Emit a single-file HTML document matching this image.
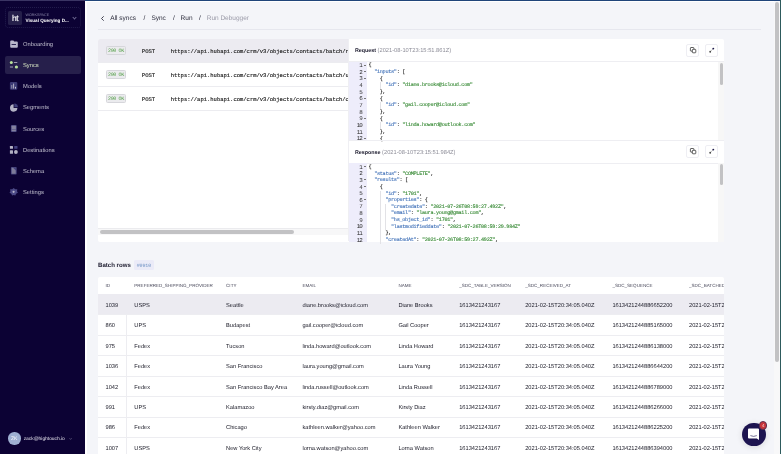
<!DOCTYPE html>
<html><head><meta charset="utf-8">
<style>
*{box-sizing:border-box;margin:0;padding:0}
html,body{width:781px;height:454px;overflow:hidden;background:#f4f5f9;font-family:"Liberation Sans",sans-serif;position:relative;text-rendering:geometricPrecision}
.abs{position:absolute}
#side{left:0;top:0;width:85px;height:454px;background:#0c0234}
#topline{left:85px;top:0;width:696px;height:1px;background:#20457a}
#topline2{left:0;top:0;width:85px;height:1px;background:#3b3564}
.nav{position:absolute;left:23px;font-size:5.75px;color:#c0bfce;line-height:8px;white-space:nowrap}
.navic{position:absolute;left:10px;width:8px;height:7px}
#main{left:85px;top:1px;width:690px;height:453px;border-left:2px solid #fff;border-top:1px solid #fff}
.crumb{position:absolute;top:15.4px;font-size:6.5px;line-height:8px;color:#2a2a3a;white-space:nowrap}
.mono{font-family:"Liberation Mono",monospace}
.panel{position:absolute;background:#fff}
.badge{position:absolute;left:7.9px;width:19.7px;height:9px;border:0.5px solid #d6d6db;background:#ebebee;border-radius:1.5px;font-family:"Liberation Mono",monospace;font-size:5.1px;letter-spacing:-0.45px;line-height:8px;padding-top:0.4px;color:#56a04a;text-align:center;overflow:hidden}
.post{position:absolute;left:43.6px;font-size:5.6px;line-height:6px;color:#222;-webkit-text-stroke:0.15px #222}
.url{position:absolute;left:72.5px;font-size:5.5px;line-height:6px;color:#222;white-space:pre;-webkit-text-stroke:0.15px #222}
.ln{position:absolute;left:349px;width:12.9px;margin-top:0.7px;text-align:right;font-family:"Liberation Mono",monospace;font-size:5.9px;letter-spacing:-0.95px;line-height:6.65px;color:#2e2e2e;transform:scaleY(1)}
.fold{position:absolute;left:363.8px;width:2.2px;height:0.6px;margin-top:2.3px;background:#777}
.cl{position:absolute;left:368.5px;font-family:"Liberation Mono",monospace;font-size:5.2px;letter-spacing:-0.30px;line-height:6.65px;color:#222;white-space:pre;-webkit-text-stroke:0.12px currentColor}
k{color:#4272b8}
s{color:#388a36;text-decoration:none}
.th{position:absolute;top:6.3px;font-size:4.55px;line-height:6px;color:#4a4a5c;white-space:nowrap}
.td{position:absolute;font-size:5.7px;line-height:8px;color:#22222e;white-space:nowrap}
.btn{position:absolute;width:12.5px;height:12.6px;border:0.5px solid #eeeef3;border-radius:2px;background:#fff}
#root{position:absolute;left:0;top:0;width:781px;height:454px;will-change:transform;overflow:hidden}
</style></head><body><div id="root">
<div id="side" class="abs">
  <div class="abs" style="left:5px;top:7px;width:76px;height:21px;border:1px dotted #221c4c;border-radius:3px"></div>
  <div class="abs" style="left:8.2px;top:10.9px;width:14px;height:14px;background:#251f4a;border-radius:1.5px;color:#f4f4f8;font-weight:400;font-size:8.4px;line-height:14px;padding-top:0.2px;text-align:center;letter-spacing:-0.2px;-webkit-text-stroke:0.15px #fff">ht</div>
  <div class="abs" style="left:25.5px;top:11.6px;font-size:3.7px;color:#8a86a8;line-height:6px">WORKSPACE</div>
  <div class="abs" style="left:25.5px;top:17px;font-size:4.6px;color:#fff;font-weight:700;line-height:7px;white-space:nowrap">Visual Querying D...</div>
  <div class="abs" style="left:72.5px;top:16px;width:3px;height:3px;border-right:0.6px solid #6d6890;border-bottom:0.6px solid #6d6890;transform:rotate(45deg)"></div>
  <div class="abs" style="left:5px;top:56px;width:75.5px;height:18px;background:#261f4b;border-radius:2px"></div>
  <svg class="abs" style="left:0;top:0" width="85" height="220" viewBox="0 0 85 220">
    <!-- onboarding folder -->
    <path d="M10.2 41.6 q0-1 1-1 h2.2 l0.8 0.8 h2.6 q1 0 1 1 v4.4 q0 1-1 1 h-5.6 q-1 0-1-1z" fill="#b9b8cc"/>
    <rect x="11.6" y="44.1" width="4.4" height="0.9" fill="#1d1848"/>
    <!-- syncs -->
    <circle cx="11.3" cy="62.4" r="1.5" fill="#b9e29a"/>
    <rect x="13.9" y="62.1" width="3.4" height="0.9" fill="#a9a6b8"/>
    <rect x="9.9" y="66.4" width="3.1" height="1.2" fill="#8f8ca6"/>
    <circle cx="16.4" cy="67" r="1.6" fill="#b9e29a"/>
    <!-- models -->
    <rect x="9.9" y="81.9" width="7.4" height="7.9" rx="1.2" fill="#3c3a74"/>
    <rect x="11.3" y="85" width="1" height="3.6" fill="#9896b0"/>
    <rect x="13.1" y="83.6" width="1" height="5" fill="#b4b2c6"/>
    <rect x="15" y="86.8" width="1" height="1.8" fill="#c4c2d2"/>
    <!-- segments pie -->
    <path d="M13.6 104.3 A3.7 3.7 0 1 0 17.4 108.1 L13.6 108.1 Z" fill="#b3b2c4"/>
    <path d="M14.3 103.4 A3.6 3.6 0 0 1 17.9 107.2 L14.3 107.2 Z" fill="#41407a"/>
    <!-- sources -->
    <rect x="10.9" y="125.1" width="5.8" height="6.9" rx="1" fill="#4a4880"/>
    <rect x="11.7" y="125.7" width="4.2" height="5.6" rx="0.5" fill="#84829e"/><rect x="11.7" y="129.2" width="4.2" height="0.5" fill="#4a4880"/>
    <!-- destinations -->
    <rect x="9.9" y="145.9" width="3.1" height="2.9" rx="0.5" fill="#b6b5c6"/>
    <rect x="14.2" y="145.9" width="3.3" height="2.9" rx="0.5" fill="#434180"/>
    <rect x="9.9" y="150.2" width="3.1" height="3.5" rx="0.5" fill="#b0afc2"/>
    <circle cx="15.9" cy="152" r="1.9" fill="#b3b2c4"/>
    <!-- schema -->
    <rect x="10.9" y="166.9" width="5.8" height="7.6" rx="0.8" fill="#45437c"/>
    <path d="M11.7 167.8 h1.4 l2.6 2.6 v3.3 h-4z" fill="#7e7c9a"/>
    <!-- settings -->
    <path d="M13.7 188 l1.5 1.3 2.1 0 -0.3 1.9 0.9 1.6 -1.8 1 -0.8 1.8 -1.6 -0.7 -1.6 0.7 -0.8 -1.8 -1.8 -1 0.9 -1.6 -0.3 -1.9 2.1 0z" fill="#4b4985"/>
    <circle cx="13.6" cy="191.8" r="1.1" fill="#b6b4ca"/>
  </svg>
  <div class="nav" style="top:40.8px">Onboarding</div>
  <div class="nav" style="top:62.0px;color:#d6e5c2">Syncs</div>
  <div class="nav" style="top:83.2px">Models</div>
  <div class="nav" style="top:104.4px">Segments</div>
  <div class="nav" style="top:125.6px">Sources</div>
  <div class="nav" style="top:146.8px">Destinations</div>
  <div class="nav" style="top:168.0px">Schema</div>
  <div class="nav" style="top:189.2px">Settings</div>
  <div class="abs" style="left:8px;top:432px;width:12.5px;height:12.5px;border-radius:50%;background:#9fb0d2;color:#fff;font-size:5px;line-height:12.5px;padding-top:0.6px;text-align:center">ZK</div>
  <div class="abs" style="left:23.7px;top:436.3px;font-size:4.87px;color:#e6e4ee;line-height:7px;white-space:nowrap">zack@hightouch.io</div>
</div>
<svg class="abs" style="left:68px;top:436.6px" width="5" height="4" viewBox="0 0 5 4"><path d="M1.5 1.2 L2.6 2.4 L3.7 1.2" fill="none" stroke="#8d8aa8" stroke-width="0.5"/></svg>
<div id="topline" class="abs"></div><div id="topline2" class="abs"></div>
<div id="main" class="abs"></div>
<!-- breadcrumb -->
<svg class="abs" style="left:100.4px;top:14.6px" width="6" height="7" viewBox="0 0 6 7"><path d="M3.7 1.3 L1.5 3.5 L3.7 5.7" fill="none" stroke="#3a3a4a" stroke-width="0.95"/></svg>
<div class="crumb" style="left:110.3px">All syncs</div>
<div class="crumb" style="left:143.5px">/</div>
<div class="crumb" style="left:151.4px">Sync</div>
<div class="crumb" style="left:173px">/</div>
<div class="crumb" style="left:180.6px">Run</div>
<div class="crumb" style="left:199px">/</div>
<div class="crumb" style="left:206.7px;color:#9a9aa8">Run Debugger</div>
<div class="abs" style="left:98px;top:29px;width:662.5px;height:1px;background:#e6e7ee"></div>

<!-- requests panel -->
<div class="panel" style="left:98.2px;top:39px;width:625.8px;height:202.7px;border-radius:2px;overflow:hidden">
  <div class="abs" style="left:0;top:0;width:250.6px;height:202.7px;overflow:hidden">
<div class="abs" style="left:0;top:0;width:251px;height:23.2px;background:#ecebf1"></div>
<div class="abs" style="left:0;top:23.4px;width:251px;height:1px;background:#ececf0"></div>
<div class="badge" style="top:6.5px">200 OK</div>
<div class="post mono" style="top:10.2px">POST</div>
<div class="url mono" style="top:10.2px">https://api.hubapi.com/crm/v3/objects/contacts/batch/read</div>
<div class="abs" style="left:0;top:47.4px;width:251px;height:1px;background:#ececf0"></div>
<div class="badge" style="top:30.5px">200 OK</div>
<div class="post mono" style="top:34.2px">POST</div>
<div class="url mono" style="top:34.2px">https://api.hubapi.com/crm/v3/objects/contacts/batch/uead</div>
<div class="abs" style="left:0;top:71.4px;width:251px;height:1px;background:#ececf0"></div>
<div class="badge" style="top:54.5px">200 OK</div>
<div class="post mono" style="top:58.2px">POST</div>
<div class="url mono" style="top:58.2px">https://api.hubapi.com/crm/v3/objects/contacts/batch/cead</div>
    <div class="abs" style="left:0;top:189.3px;width:250px;height:6.7px;background:#f7f7f8;border-top:0.5px solid #ebebee"></div>
    <div class="abs" style="left:1.5px;top:191.3px;width:194px;height:3.7px;background:#c2c2c4;border-radius:2px"></div>
  </div>
</div>
<!-- request section -->
<div class="abs" style="left:348.4px;top:39px;width:0.5px;height:202px;background:#efeff3"></div>
<div class="abs" style="left:355px;top:46.5px;font-size:5.35px;line-height:8px;white-space:nowrap;color:#1c1b2e"><b>Request</b> <span style="color:#8d8d98;font-size:5.72px">(2021-08-10T23:15:51.861Z)</span></div>
<div class="btn" style="left:686.3px;top:44.1px"></div><svg class="abs" style="left:686px;top:44px" width="13" height="13" viewBox="0 0 13 13"><rect x="4.4" y="3.5" width="3.5" height="3.6" rx="0.6" fill="none" stroke="#3a3a3a" stroke-width="0.8"/><rect x="6.3" y="5.3" width="3.5" height="3.5" rx="0.7" fill="#fff" stroke="#3a3a3a" stroke-width="0.8"/></svg>
<div class="btn" style="left:705.3px;top:44.1px"></div><svg class="abs" style="left:705px;top:44px" width="13" height="13" viewBox="0 0 13 13"><path d="M5.3 7.6 L8.3 4.6" stroke="#666" stroke-width="0.4"/><circle cx="8.3" cy="4.6" r="0.95" fill="#1f1b4a"/><circle cx="5.2" cy="7.7" r="0.95" fill="#4a4a4a"/></svg>
<div class="abs" style="left:348.6px;top:61.2px;width:375.4px;height:0.6px;background:#eeeef2"></div>
<div class="abs" style="left:349px;top:61.5px;width:18px;height:79px;background:#eeedfb"></div>
<div class="abs" style="left:348.6px;top:61.5px;width:375px;height:79px;overflow:hidden">
</div>
<div class="abs" style="left:379.58px;top:82.35px;width:0.5px;height:6.65px;background:#e2e2e6"></div>
<div class="abs" style="left:379.58px;top:102.30px;width:0.5px;height:6.65px;background:#e2e2e6"></div>
<div class="abs" style="left:379.58px;top:122.25px;width:0.5px;height:6.65px;background:#e2e2e6"></div>
<div class="ln" style="top:62.40px">1</div>
<div class="fold" style="top:62.40px"></div>
<div class="cl" style="top:62.40px">{</div>
<div class="ln" style="top:69.05px">2</div>
<div class="fold" style="top:69.05px"></div>
<div class="cl" style="top:69.05px">  <k>"inputs"</k>: [</div>
<div class="ln" style="top:75.70px">3</div>
<div class="fold" style="top:75.70px"></div>
<div class="cl" style="top:75.70px">    {</div>
<div class="ln" style="top:82.35px">4</div>
<div class="cl" style="top:82.35px">      <k>"id"</k>: <s>"diane.brooks@icloud.com"</s></div>
<div class="ln" style="top:89.00px">5</div>
<div class="cl" style="top:89.00px">    },</div>
<div class="ln" style="top:95.65px">6</div>
<div class="fold" style="top:95.65px"></div>
<div class="cl" style="top:95.65px">    {</div>
<div class="ln" style="top:102.30px">7</div>
<div class="cl" style="top:102.30px">      <k>"id"</k>: <s>"gail.cooper@icloud.com"</s></div>
<div class="ln" style="top:108.95px">8</div>
<div class="cl" style="top:108.95px">    },</div>
<div class="ln" style="top:115.60px">9</div>
<div class="fold" style="top:115.60px"></div>
<div class="cl" style="top:115.60px">    {</div>
<div class="ln" style="top:122.25px">10</div>
<div class="cl" style="top:122.25px">      <k>"id"</k>: <s>"linda.howard@outlook.com"</s></div>
<div class="ln" style="top:128.90px">11</div>
<div class="cl" style="top:128.90px">    },</div>
<div class="ln" style="top:135.55px">12</div>
<div class="fold" style="top:135.55px"></div>
<div class="cl" style="top:135.55px">    {</div>
<div class="abs" style="left:718px;top:61.5px;width:6px;height:79px;background:#f7f7f7"></div>
<div class="abs" style="left:719.5px;top:62.7px;width:3.3px;height:22.3px;background:#c2c2c4;border-radius:2px"></div>
<div class="abs" style="left:348.6px;top:140px;width:375.4px;height:0.6px;background:#eeeef2"></div>

<!-- response section -->
<div class="abs" style="left:355px;top:148.5px;font-size:5.35px;line-height:8px;white-space:nowrap;color:#1c1b2e"><b>Response</b> <span style="color:#8d8d98;font-size:5.72px">(2021-08-10T23:15:51.984Z)</span></div>
<div class="btn" style="left:686.3px;top:145.3px"></div><svg class="abs" style="left:686px;top:145.2px" width="13" height="13" viewBox="0 0 13 13"><rect x="4.4" y="3.5" width="3.5" height="3.6" rx="0.6" fill="none" stroke="#3a3a3a" stroke-width="0.8"/><rect x="6.3" y="5.3" width="3.5" height="3.5" rx="0.7" fill="#fff" stroke="#3a3a3a" stroke-width="0.8"/></svg>
<div class="btn" style="left:705.3px;top:145.3px"></div><svg class="abs" style="left:705px;top:145.2px" width="13" height="13" viewBox="0 0 13 13"><path d="M5.3 7.6 L8.3 4.6" stroke="#666" stroke-width="0.4"/><circle cx="8.3" cy="4.6" r="0.95" fill="#1f1b4a"/><circle cx="5.2" cy="7.7" r="0.95" fill="#4a4a4a"/></svg>
<div class="abs" style="left:348.6px;top:162.5px;width:375.4px;height:0.6px;background:#eeeef2"></div>
<div class="abs" style="left:349px;top:162.8px;width:18px;height:78.9px;background:#eeedfb"></div>
<div class="abs" style="left:379.58px;top:190.50px;width:0.5px;height:53.20px;background:#e2e2e6"></div>
<div class="abs" style="left:385.22px;top:203.80px;width:0.5px;height:26.60px;background:#e2e2e6"></div>
<div class="ln" style="top:163.90px">1</div>
<div class="fold" style="top:163.90px"></div>
<div class="cl" style="top:163.90px">{</div>
<div class="ln" style="top:170.55px">2</div>
<div class="cl" style="top:170.55px">  <k>"status"</k>: <s>"COMPLETE"</s>,</div>
<div class="ln" style="top:177.20px">3</div>
<div class="fold" style="top:177.20px"></div>
<div class="cl" style="top:177.20px">  <k>"results"</k>: [</div>
<div class="ln" style="top:183.85px">4</div>
<div class="fold" style="top:183.85px"></div>
<div class="cl" style="top:183.85px">    {</div>
<div class="ln" style="top:190.50px">5</div>
<div class="cl" style="top:190.50px">      <k>"id"</k>: <s>"1701"</s>,</div>
<div class="ln" style="top:197.15px">6</div>
<div class="fold" style="top:197.15px"></div>
<div class="cl" style="top:197.15px">      <k>"properties"</k>: {</div>
<div class="ln" style="top:203.80px">7</div>
<div class="cl" style="top:203.80px">        <k>"createdate"</k>: <s>"2021-07-26T08:59:27.492Z"</s>,</div>
<div class="ln" style="top:210.45px">8</div>
<div class="cl" style="top:210.45px">        <k>"email"</k>: <s>"laura.young@gmail.com"</s>,</div>
<div class="ln" style="top:217.10px">9</div>
<div class="cl" style="top:217.10px">        <k>"hs_object_id"</k>: <s>"1701"</s>,</div>
<div class="ln" style="top:223.75px">10</div>
<div class="cl" style="top:223.75px">        <k>"lastmodifieddate"</k>: <s>"2021-07-26T08:59:29.984Z"</s></div>
<div class="ln" style="top:230.40px">11</div>
<div class="cl" style="top:230.40px">      },</div>
<div class="ln" style="top:237.05px">12</div>
<div class="cl" style="top:237.05px">      <k>"createdAt"</k>: <s>"2021-07-26T08:59:27.492Z"</s>,</div>
<div class="abs" style="left:718px;top:162.8px;width:6px;height:78.9px;background:#f7f7f7"></div>
<div class="abs" style="left:719.5px;top:164.4px;width:3.3px;height:20.4px;background:#c2c2c4;border-radius:2px"></div>

<!-- batch rows -->
<div class="abs" style="left:98px;top:262.2px;font-size:6.1px;font-weight:700;line-height:8px;color:#1c1b2e;white-space:nowrap">Batch rows</div>
<div class="abs" style="left:134px;top:260.3px;width:19.8px;height:9.7px;background:#ebebf8;border-radius:1.5px;font-family:'Liberation Mono',monospace;font-size:5px;letter-spacing:-0.1px;line-height:9.7px;padding-top:2.1px;color:#6a8ec2;text-align:center">#0910</div>
<div class="panel" style="left:98.2px;top:276.6px;width:625.8px;height:190px;overflow:hidden;border-radius:2px">
<div class="th" style="left:7.3px">ID</div>
<div class="th" style="left:36.1px">PREFERRED_SHIPPING_PROVIDER</div>
<div class="th" style="left:127.9px">CITY</div>
<div class="th" style="left:204.2px">EMAIL</div>
<div class="th" style="left:300.2px">NAME</div>
<div class="th" style="left:361.0px">_SDC_TABLE_VERSION</div>
<div class="th" style="left:427.0px">_SDC_RECEIVED_AT</div>
<div class="th" style="left:514.2px">_SDC_SEQUENCE</div>
<div class="th" style="left:590.8px">_SDC_BATCHED_AT</div>
<div class="abs" style="left:0;top:17.8px;width:626px;height:20.45px;background:#ecebf1"></div>
<div class="abs" style="left:0;top:37.8px;width:626px;height:1px;background:#ededf1"></div>
<div class="td" style="left:7.3px;top:25.2px">1039</div>
<div class="td" style="left:36.1px;top:25.2px">USPS</div>
<div class="td" style="left:127.9px;top:25.2px">Seattle</div>
<div class="td" style="left:204.2px;top:25.2px">diane.brooks@icloud.com</div>
<div class="td" style="left:300.2px;top:25.2px">Diane Brooks</div>
<div class="td" style="left:361.0px;top:25.2px">1613421243167</div>
<div class="td" style="left:427.0px;top:25.2px">2021-02-15T20:34:05.040Z</div>
<div class="td" style="left:514.2px;top:25.2px">1613421244886652200</div>
<div class="td" style="left:590.8px;top:25.2px">2021-02-15T20:34:05.040Z</div>
<div class="abs" style="left:0;top:58.2px;width:626px;height:1px;background:#ededf1"></div>
<div class="td" style="left:7.3px;top:45.6px">860</div>
<div class="td" style="left:36.1px;top:45.6px">UPS</div>
<div class="td" style="left:127.9px;top:45.6px">Budapest</div>
<div class="td" style="left:204.2px;top:45.6px">gail.cooper@icloud.com</div>
<div class="td" style="left:300.2px;top:45.6px">Gail Cooper</div>
<div class="td" style="left:361.0px;top:45.6px">1613421243167</div>
<div class="td" style="left:427.0px;top:45.6px">2021-02-15T20:34:05.040Z</div>
<div class="td" style="left:514.2px;top:45.6px">1613421244885165000</div>
<div class="td" style="left:590.8px;top:45.6px">2021-02-15T20:34:05.040Z</div>
<div class="abs" style="left:0;top:78.7px;width:626px;height:1px;background:#ededf1"></div>
<div class="td" style="left:7.3px;top:66.1px">975</div>
<div class="td" style="left:36.1px;top:66.1px">Fedex</div>
<div class="td" style="left:127.9px;top:66.1px">Tucson</div>
<div class="td" style="left:204.2px;top:66.1px">linda.howard@outlook.com</div>
<div class="td" style="left:300.2px;top:66.1px">Linda Howard</div>
<div class="td" style="left:361.0px;top:66.1px">1613421243167</div>
<div class="td" style="left:427.0px;top:66.1px">2021-02-15T20:34:05.040Z</div>
<div class="td" style="left:514.2px;top:66.1px">1613421244886138000</div>
<div class="td" style="left:590.8px;top:66.1px">2021-02-15T20:34:05.040Z</div>
<div class="abs" style="left:0;top:99.1px;width:626px;height:1px;background:#ededf1"></div>
<div class="td" style="left:7.3px;top:86.5px">1036</div>
<div class="td" style="left:36.1px;top:86.5px">Fedex</div>
<div class="td" style="left:127.9px;top:86.5px">San Francisco</div>
<div class="td" style="left:204.2px;top:86.5px">laura.young@gmail.com</div>
<div class="td" style="left:300.2px;top:86.5px">Laura Young</div>
<div class="td" style="left:361.0px;top:86.5px">1613421243167</div>
<div class="td" style="left:427.0px;top:86.5px">2021-02-15T20:34:05.040Z</div>
<div class="td" style="left:514.2px;top:86.5px">1613421244886644200</div>
<div class="td" style="left:590.8px;top:86.5px">2021-02-15T20:34:05.040Z</div>
<div class="abs" style="left:0;top:119.5px;width:626px;height:1px;background:#ededf1"></div>
<div class="td" style="left:7.3px;top:107.0px">1042</div>
<div class="td" style="left:36.1px;top:107.0px">Fedex</div>
<div class="td" style="left:127.9px;top:107.0px">San Francisco Bay Area</div>
<div class="td" style="left:204.2px;top:107.0px">linda.russell@outlook.com</div>
<div class="td" style="left:300.2px;top:107.0px">Linda Russell</div>
<div class="td" style="left:361.0px;top:107.0px">1613421243167</div>
<div class="td" style="left:427.0px;top:107.0px">2021-02-15T20:34:05.040Z</div>
<div class="td" style="left:514.2px;top:107.0px">1613421244886789000</div>
<div class="td" style="left:590.8px;top:107.0px">2021-02-15T20:34:05.040Z</div>
<div class="abs" style="left:0;top:140.0px;width:626px;height:1px;background:#ededf1"></div>
<div class="td" style="left:7.3px;top:127.5px">991</div>
<div class="td" style="left:36.1px;top:127.5px">UPS</div>
<div class="td" style="left:127.9px;top:127.5px">Kalamazoo</div>
<div class="td" style="left:204.2px;top:127.5px">kirsty.diaz@gmail.com</div>
<div class="td" style="left:300.2px;top:127.5px">Kirsty Diaz</div>
<div class="td" style="left:361.0px;top:127.5px">1613421243167</div>
<div class="td" style="left:427.0px;top:127.5px">2021-02-15T20:34:05.040Z</div>
<div class="td" style="left:514.2px;top:127.5px">1613421244886266000</div>
<div class="td" style="left:590.8px;top:127.5px">2021-02-15T20:34:05.040Z</div>
<div class="abs" style="left:0;top:160.4px;width:626px;height:1px;background:#ededf1"></div>
<div class="td" style="left:7.3px;top:147.9px">986</div>
<div class="td" style="left:36.1px;top:147.9px">Fedex</div>
<div class="td" style="left:127.9px;top:147.9px">Chicago</div>
<div class="td" style="left:204.2px;top:147.9px">kathleen.walker@yahoo.com</div>
<div class="td" style="left:300.2px;top:147.9px">Kathleen Walker</div>
<div class="td" style="left:361.0px;top:147.9px">1613421243167</div>
<div class="td" style="left:427.0px;top:147.9px">2021-02-15T20:34:05.040Z</div>
<div class="td" style="left:514.2px;top:147.9px">1613421244886225200</div>
<div class="td" style="left:590.8px;top:147.9px">2021-02-15T20:34:05.040Z</div>
<div class="abs" style="left:0;top:180.9px;width:626px;height:1px;background:#ededf1"></div>
<div class="td" style="left:7.3px;top:168.4px">1007</div>
<div class="td" style="left:36.1px;top:168.4px">USPS</div>
<div class="td" style="left:127.9px;top:168.4px">New York City</div>
<div class="td" style="left:204.2px;top:168.4px">lorna.watson@yahoo.com</div>
<div class="td" style="left:300.2px;top:168.4px">Lorna Watson</div>
<div class="td" style="left:361.0px;top:168.4px">1613421243167</div>
<div class="td" style="left:427.0px;top:168.4px">2021-02-15T20:34:05.040Z</div>
<div class="td" style="left:514.2px;top:168.4px">1613421244886394000</div>
<div class="td" style="left:590.8px;top:168.4px">2021-02-15T20:34:05.040Z</div>
<div class="abs" style="left:27.5px;top:38.3px;width:1px;height:170px;background:#ededf1"></div>
</div>

<!-- chat -->
<div class="abs" style="left:742.3px;top:422.6px;width:23.5px;height:23.5px;border-radius:50%;background:#1d1450;box-shadow:0 1px 6px rgba(0,0,0,0.12)"></div>
<svg class="abs" style="left:742px;top:422px" width="24" height="24" viewBox="0 0 24 24"><path d="M7 6.4 h9 q1 0 1 1 v10.6 l-2.2 -1.4 h-7.8 q-1 0-1-1 v-8.2 q0-1 1-1z" fill="#fff"/><path d="M8.4 13.6 q3.2 1.6 6.4 0" fill="none" stroke="#1d1450" stroke-width="0.6"/></svg>
<div class="abs" style="left:758.9px;top:421.3px;width:8.6px;height:8.6px;border-radius:50%;background:#c9353a;border:0.5px solid #5a3050;color:#f4d8d8;font-size:4.4px;line-height:7px;text-align:center">4</div>

<!-- page scrollbar -->
<div class="abs" style="left:773.5px;top:1px;width:7.5px;height:453px;background:#f8f8f9"></div>
<div class="abs" style="left:775px;top:2px;width:4px;height:360px;background:#c2c2c4;border-radius:2px"></div>
<div class="abs" style="left:780px;top:0;width:1px;height:454px;background:#2d5a5c"></div>
</div></body></html>
